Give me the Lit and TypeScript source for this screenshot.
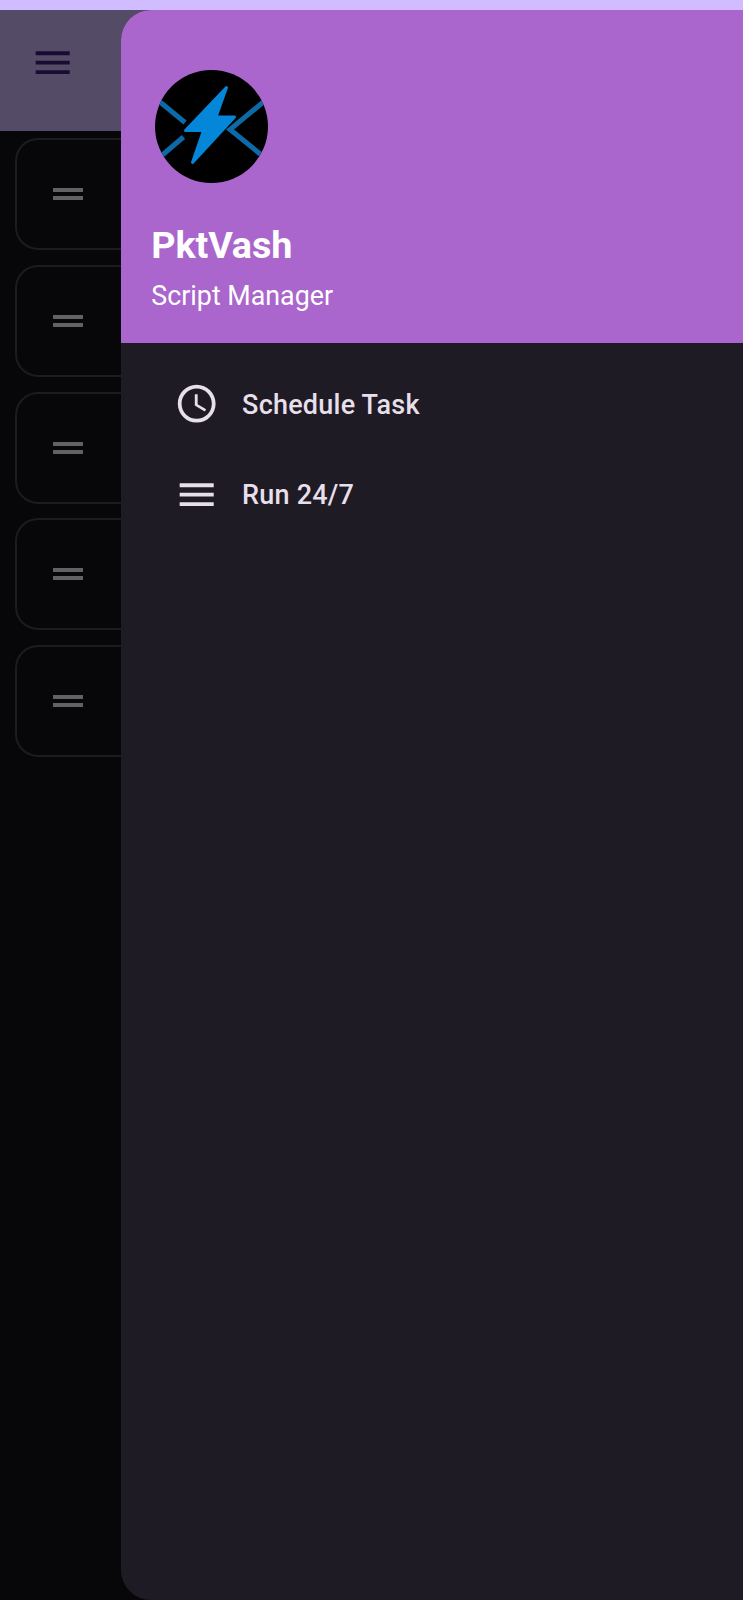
import { LitElement, html, css, svg } from "lit";
import { customElement } from "lit/decorators.js";

const menuIcon = svg`<path fill="currentColor" d="M3 18h18v-2H3v2zm0-5h18v-2H3v2zm0-7v2h18V6H3z"/>`;
const clockIcon = svg`<path fill="currentColor" d="M11.99 2C6.47 2 2 6.48 2 12s4.47 10 9.99 10C17.52 22 22 17.52 22 12S17.52 2 11.99 2zM12 20c-4.42 0-8-3.58-8-8s3.58-8 8-8 8 3.58 8 8-3.58 8-8 8zm.5-13H11v6l5.25 3.15.75-1.23-4.5-2.67z"/>`;

const items = [
  { label: "Schedule Task", icon: clockIcon },
  { label: "Run 24/7", icon: menuIcon },
];

@customElement("app-root")
export class AppRoot extends LitElement {
  static styles = css`
    :host {
      display: flex;
      flex-direction: column;
      height: 1600px;
      overflow: hidden;
      background: #070709;
      font-family: Roboto, "Liberation Sans", sans-serif;
    }
    .status { flex: none; height: 9.7px; background: #d0bcff; }
    .screen { flex: 1; min-height: 0; display: grid; grid-template-columns: 121px 1fr; }
    .behind { grid-area: 1 / 1 / 2 / 3; overflow: hidden; }
    .toolbar {
      box-sizing: border-box;
      height: 121.3px;
      padding: 30.2px 0 0 30.3px;
      background: #544b66;
      color: #190c33;
    }
    .icon { display: block; width: 45.4px; height: 45.4px; flex: none; }
    .cards { display: flex; flex-direction: column; gap: 14.7px; padding: 7.2px 15px; }
    .card {
      box-sizing: border-box;
      height: 112px;
      border: 2px solid #1c1c1e;
      border-radius: 23px;
      display: flex;
      align-items: center;
      padding-left: 36px;
    }
    .grip { width: 30px; height: 12px; display: block; }
    .drawer {
      grid-area: 1 / 2;
      z-index: 1;
      background: #1e1b24;
      border-radius: 30px 0 0 30px;
      overflow: hidden;
    }
    .header {
      box-sizing: border-box;
      height: 333px;
      padding: 60px 30.3px 0;
      background: #aa66cc;
      color: #fff;
    }
    .avatar { display: block; width: 113px; height: 113px; margin-left: 4.2px; }
    .title { margin-top: 40px; font-size: 37.7px; line-height: 44px; font-weight: 700; letter-spacing: -0.1px; }
    .subtitle { margin-top: 13px; font-size: 26.8px; line-height: 32px; }
    .nav { padding-top: 15.6px; color: #e7dfea; }
    .item {
      height: 90.8px;
      padding-left: 53px;
      display: flex;
      align-items: center;
      gap: 22.7px;
      font-size: 27px;
      line-height: 32px;
      font-weight: 500;
      letter-spacing: 0.22px;
    }
    .label { padding-top: 2px; }
  `;

  render() {
    return html`
      <div class="status"></div>
      <div class="screen">
        <div class="behind">
          <div class="toolbar"><svg class="icon" viewBox="0 0 24 24">${menuIcon}</svg></div>
          <div class="cards">
            ${[0, 1, 2, 3, 4].map(
              () => html`<div class="card">
                <svg class="grip" viewBox="0 0 30 12"><path fill="#626262" d="M0 0h30v4H0zM0 8h30v4H0z" /></svg>
              </div>`
            )}
          </div>
        </div>
        <div class="drawer">
          <div class="header">
            <svg class="avatar" viewBox="0 0 113 113">
              <defs><clipPath id="disc"><circle cx="56.5" cy="56.5" r="56.5" /></clipPath></defs>
              <circle cx="56.5" cy="56.5" r="56.5" />
              <g clip-path="url(#disc)" fill="none" stroke="#0c6aa8" stroke-width="5">
                <path d="M2 29.5L30 52.5M2 89.5L28.5 67M112 29L75 59.5L112 89.5" />
              </g>
              <path d="M71.5 17.5L61 47H79.5L37.5 92.5L48.5 60.5H30.5Z" fill="#0486d9" stroke="#0486d9" stroke-width="3" stroke-linejoin="round" />
            </svg>
            <div class="title">PktVash</div>
            <div class="subtitle">Script Manager</div>
          </div>
          <div class="nav">
            ${items.map(
              (i) => html`<div class="item"><svg class="icon" viewBox="0 0 24 24">${i.icon}</svg><span class="label">${i.label}</span></div>`
            )}
          </div>
        </div>
      </div>
    `;
  }
}
